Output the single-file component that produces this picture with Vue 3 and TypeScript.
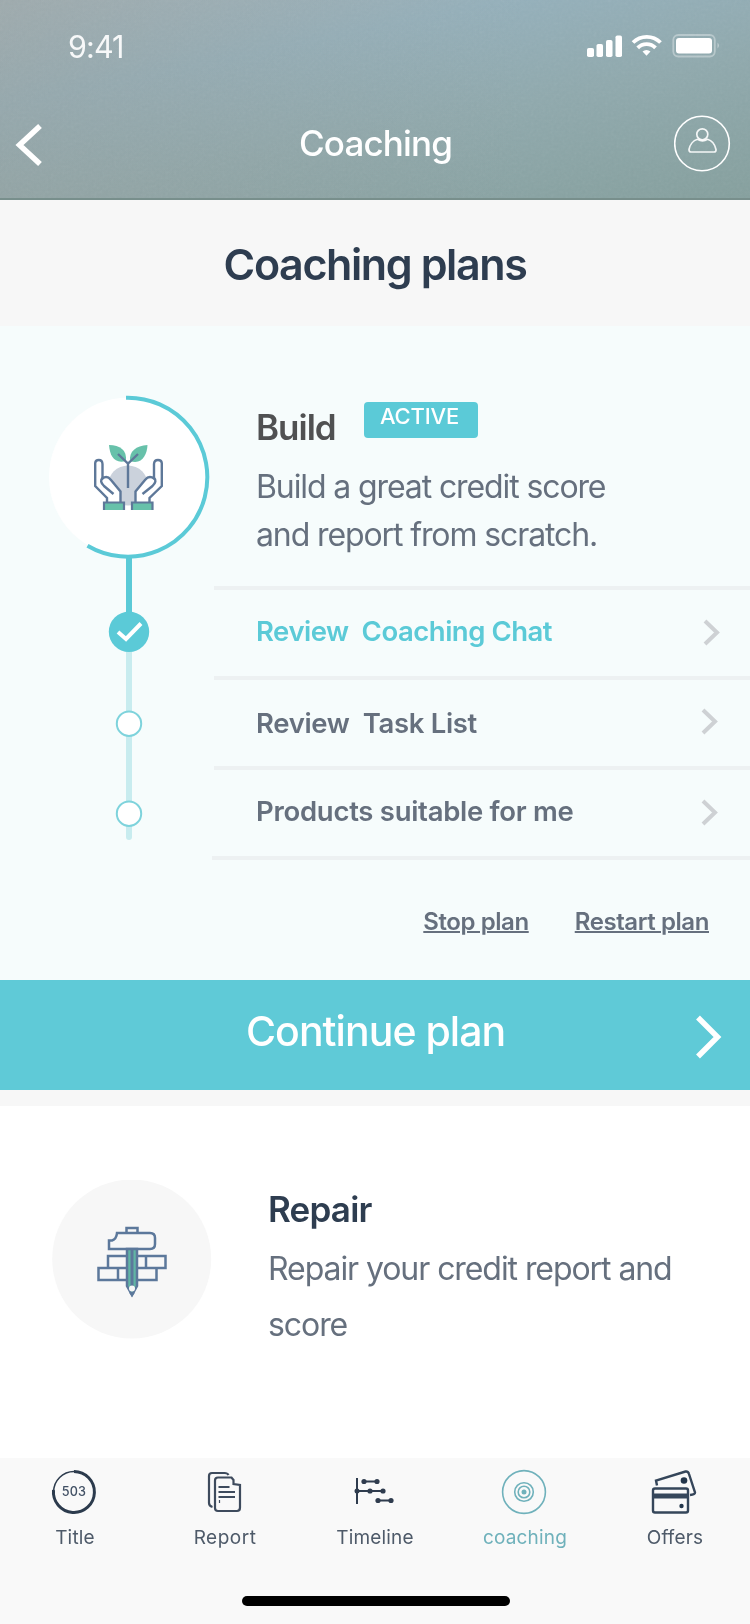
<script setup lang="ts">
interface Step { label: string; done: boolean; cls: string }
const steps: Step[] = [
  { label: 'Review\u00a0 Coaching Chat', done: true, cls: 's1' },
  { label: 'Review\u00a0 Task List', done: false, cls: 's2' },
  { label: 'Products suitable for me', done: false, cls: 's3' },
]
</script>

<template>
  <div class="screen">
    <header class="top">
      <svg class="grain" width="750" height="198"><filter id="grain"><feTurbulence type="fractalNoise" baseFrequency="0.35" numOctaves="2" /><feColorMatrix type="saturate" values="0" /></filter><rect width="750" height="198" filter="url(#grain)" /></svg>
      <div class="status">
        <span class="time">9:41</span>
        <svg width="136" height="26" viewBox="584 32 136 26">
          <g fill="#fff">
            <rect x="587" y="48" width="7" height="9" rx="1.8" />
            <rect x="596.500" y="44" width="6.500" height="13" rx="1.8" />
            <rect x="606" y="40" width="6.500" height="17" rx="1.8" />
            <rect x="615.500" y="35.500" width="6.500" height="21.500" rx="1.800" />
            <path d="M642.500 51.500L646.500 55.700L650.500 51.500A6 6 0 0 0 642.500 51.500Z" />
            <rect x="676" y="38" width="36" height="15.500" rx="3" />
          </g>
          <g fill="none" stroke="#fff" stroke-width="3.800">
            <path d="M633 42.500A19.500 19.500 0 0 1 660.500 42.500" />
            <path d="M637.700 47.800A12.500 12.500 0 0 1 655.500 47.800" />
          </g>
          <rect x="673.300" y="35" width="41.500" height="21.500" rx="5" fill="none" stroke="#fff" stroke-opacity=".35" stroke-width="1.800" />
          <path d="M717.500 42.500v6q1.500-1.500 1.500-3t-1.500-3" fill="#fff" fill-opacity=".4" />
        </svg>
      </div>
      <div class="nav">
        <svg width="30" height="44" viewBox="0 0 30 44"><path d="M26 3L5.500 22L26 41" fill="none" stroke="#fff" stroke-width="5.500" /></svg>
        <h1><span>Coaching</span></h1>
        <svg width="58" height="58" viewBox="0 0 58 58" fill="none" stroke="#fff">
          <circle cx="28" cy="28.500" r="27.300" stroke-width="1.600" />
          <g stroke-width="1.700" stroke-opacity=".9"><circle cx="28.300" cy="19.300" r="5.500" />
          <path d="M23.500 24.300C19 25.500 15.800 30 15 34.500Q15 37 17 37H40Q42.200 37 42 34.500C41 30 38 25.500 33.500 24.300Q28.500 27.300 23.500 24.300Z" stroke-linejoin="round" /></g>
        </svg>
      </div>
    </header>

    <h2 class="title"><span>Coaching plans</span></h2>

    <section class="build">
      <div class="rail">
        <svg width="190" height="450" viewBox="40 390 190 450">
          <circle cx="128.500" cy="477" r="79.500" fill="#fff" />
          <path d="M129 556V632" stroke="#5bcad7" stroke-width="6" />
          <path d="M129 652V837" stroke="#c8ecef" stroke-width="6" stroke-linecap="round" />
          <path d="M126 397.700A79.500 79.500 0 1 1 87.500 545.700" fill="none" stroke="#5bcad7" stroke-width="4" />
          <circle cx="129" cy="631.800" r="20.200" fill="#5bcad7" />
          <path d="M118 632L126 639L141 623.500" fill="none" stroke="#fff" stroke-width="4" />
          <g fill="#fff" stroke="#7ed3dc" stroke-width="2"><circle cx="129" cy="723.700" r="12.200" /><circle cx="129" cy="813.700" r="12.200" /></g>
          <circle cx="128" cy="485.500" r="20" fill="#cbd2dc" />
          <g fill="#67c1aa">
            <path d="M109 445C120 445 127 450 126 461C114 464 110 456 109 445Z" />
            <path d="M147.500 445C136 446 129 451 130 461C142 465 147 455 147.500 445Z" />
          </g>
          <g stroke="#5e7899" stroke-width="2.400">
            <path d="M107 502V498L95.200 486V463Q95.500 460 98.800 460Q102.300 460 102.500 464V478.500Q107 475 111 480L120.500 491.500V502" fill="#fff" />
            <path d="M149.500 502V498L161.800 486V463Q161.500 460 158 460Q154.200 460 154 464V478.500Q149 475 145 480L135.500 491.500V502" fill="#fff" />
          </g>
          <g fill="none" stroke="#5e7899" stroke-width="2.400">
            <path d="M102.600 478Q99 481 104 486L113.500 494M154 478Q157.500 481 152.500 486L142.500 494" />
            <path d="M118 454L128 463.500L138 454M128 463V488" />
          </g>
          <g fill="#67c1aa" stroke="#5e7899" stroke-width="2.200">
            <path d="M104 510V502.500H124V510M132 510V502.500H152.500V510" />
          </g>
        </svg>
      </div>
      <div class="plan">
        <div class="head"><h3><span>Build</span></h3><b class="badge"><span>ACTIVE</span></b></div>
        <p><span>Build a great credit score</span><br /><span>and report from scratch.</span></p>
        <ul>
          <li v-for="s in steps" :key="s.label" :class="[s.cls, { done: s.done }]">
            <span>{{ s.label }}</span>
            <svg width="22" height="30" viewBox="0 0 22 30"><path d="M4 3L16 14.500L4 26" fill="none" stroke="#ced1d4" stroke-width="4" /></svg>
          </li>
        </ul>
        <div class="links"><a>Stop plan</a><a>Restart plan</a></div>
      </div>
    </section>

    <button class="continue">
      <span>Continue plan</span>
      <svg width="30" height="46" viewBox="0 0 30 46"><path d="M3 3.500L22.500 23L3 42.500" fill="none" stroke="#fff" stroke-width="5.500" /></svg>
    </button>

    <section class="repair">
      <svg width="160" height="160" viewBox="52 1180 160 160">
        <circle cx="131.700" cy="1259" r="79.500" fill="#f7f7f7" />
        <g fill="none" stroke="#5c789b" stroke-width="2.500">
          <path d="M126.500 1232V1228H137.500V1232" />
          <path d="M117 1233H150Q155 1233 155 1238V1244Q155 1249 150 1249H109V1240.500H112Q116.500 1239 117 1233Z" />
          <path d="M126 1256H108V1268H126M138 1256H165.500V1268H138M146 1256V1268M126 1268H98.500V1280H126M138 1268H156.500V1280H138M118 1268V1280" />
          <path d="M127 1249V1286L132 1295L137 1286V1249Z" fill="#61b5a4" />
          <path d="M132 1249V1286" stroke-width="3" />
        </g>
        <circle cx="132" cy="1288.500" r="3" fill="#f7f7f7" />
        <path d="M129 1292.500H135L132 1297Z" fill="#5c789b" />
      </svg>
      <div class="rtext"><h3><span>Repair</span></h3><p><span>Repair your credit report and</span><br /><span>score</span></p></div>
    </section>

    <footer class="bottom">
      <nav>
        <a><svg width="48" height="48" viewBox="50 1468 48 48"><circle cx="74" cy="1492" r="20.400" fill="none" stroke="#2c3b4d" stroke-width="1.500" /><path d="M74 1471.500A20.500 20.500 0 1 1 53.500 1490" fill="none" stroke="#2c3b4d" stroke-width="3" /><text x="74" y="1495.500" text-anchor="middle" textLength="24.500" lengthAdjust="spacingAndGlyphs" font-size="12.500" font-weight="500" fill="#415064">503</text></svg><span>Title</span></a>
        <a><svg width="48" height="48" viewBox="200.500 1468 48 48" fill="none" stroke="#3e4b5d" stroke-width="2.200"><path d="M213 1507Q209.500 1506 209.500 1503V1476Q209.500 1473 212.500 1473H225Q228 1473 229 1475" /><path d="M218.500 1477.500H232L234 1480V1484L240.500 1485V1507.500Q240.500 1511 237.500 1511H218.500Q215.500 1511 215.500 1508V1480.500Q215.500 1477.500 218.500 1477.500Z" /><path d="M219 1487H230M219 1492H235.500M219 1497H235.500" /><path d="M220 1500v3" stroke-width="1.200" /></svg><span class="t2">Report</span></a>
        <a><svg width="48" height="48" viewBox="350.500 1468 48 48" stroke="#2f3c4e" stroke-width="2" fill="#2f3c4e"><path d="M357.500 1478V1504M364 1481.500H376M356 1491H384M378 1500.500H391" /><g stroke="none"><circle cx="364.500" cy="1481.500" r="2.600" /><circle cx="377.500" cy="1481.500" r="2.600" /><circle cx="357.500" cy="1491" r="2.500" /><circle cx="370.500" cy="1491" r="2.600" /><circle cx="383.500" cy="1491" r="2.600" /><circle cx="378.500" cy="1500.500" r="2.600" /><circle cx="391.500" cy="1500.500" r="2.600" /></g></svg><span>Timeline</span></a>
        <a class="on"><svg width="48" height="48" viewBox="500 1468 48 48" fill="none" stroke="#6fb1bb" stroke-width="1.600"><circle cx="524" cy="1492" r="21.400" /><circle cx="524" cy="1492" r="9.300" /><circle cx="524" cy="1492" r="5.800" /><circle cx="524" cy="1492" r="2.500" fill="#6fb1bb" stroke="none" /></svg><span>coaching</span></a>
        <a><svg width="48" height="48" viewBox="650.500 1468 48 48" fill="none" stroke="#35465a" stroke-width="2.400"><path d="M657.500 1485.500L656.500 1480.500L686 1471.500Q689 1471 689.500 1474L695.500 1492.500Q695.500 1494.500 690.500 1495" /><rect x="653.500" y="1488.500" width="35" height="24" rx="2" /><path d="M653 1496H688" stroke-width="5" /><circle cx="684.500" cy="1480.500" r="3.300" fill="#23364b" stroke="none" /><circle cx="682" cy="1506" r="2.200" fill="#23364b" stroke="none" /></svg><span>Offers</span></a>
      </nav>
      <div class="home"></div>
    </footer>
  </div>
</template>

<style>
body { margin: 0; }
</style>

<style scoped>
* { box-sizing: border-box; }
.screen { width: 750px; height: 1624px; overflow: hidden; display: flex; flex-direction: column; background: #fff; font-family: Inter, "Liberation Sans", sans-serif; color: #66707e; }
h1, h2, h3, p, ul { margin: 0; padding: 0; font-weight: 400; list-style: none; }
span { white-space: nowrap; }
svg { display: block; flex: none; }
.top { position: relative; height: 200px; flex: none; color: #fff; background: linear-gradient(to right, rgba(150,153,146,.36), rgba(142,174,188,0) 70%), linear-gradient(168deg, #a2b3bb 0%, #94afba 30%, #8fa8ac 60%, #859f9d 100%); border-bottom: 2px solid #788f8c; }
.grain { position: absolute; left: 0; top: 0; opacity: .2; mix-blend-mode: soft-light; }
.status { height: 93px; padding: 31px 30px 0 68px; display: flex; justify-content: space-between; }
.status svg { margin-top: 1px; }
.time { font-size: 30.5px; line-height: 32px; letter-spacing: -.9px; color: rgba(255,255,255,.92); }
.nav { height: 105px; padding: 22px 18px 0 14px; display: flex; }
.nav > svg:first-child { margin-top: 8px; }
.nav h1 { flex: 1; padding-left: 255px; font-size: 35px; line-height: 56px; font-weight: 500; letter-spacing: -.85px; }
.title { height: 126px; flex: none; text-align: center; background: #f7f7f7; color: #2e3d50; font-size: 43px; font-weight: 600; line-height: 128px; letter-spacing: -1.4px; }
.build { height: 654px; flex: none; background: #f6fcfc; display: flex; }
.rail { width: 212px; padding: 64px 0 0 40px; }
.plan { flex: 1; padding-top: 76px; }
.head { display: flex; padding-left: 44px; height: 61px; }
h3 { font-size: 35px; font-weight: 600; line-height: 50px; color: #505152; letter-spacing: -1px; width: 108px; }
.badge { width: 114px; height: 36px; border-radius: 4px; background: #5bcad7; color: #fff; font-weight: 500; font-size: 22px; line-height: 28px; text-align: center; padding-right: 3px; letter-spacing: -.15px; }
p { font-size: 32px; line-height: 48px; padding-left: 44px; letter-spacing: -1.11px; }
.plan ul { margin: 27px 0 0 2px; }
li { height: 90px; border-top: 4px solid #edf1f2; padding: 0 29px 0 42px; display: flex; justify-content: space-between; font-size: 27.5px; font-weight: 600; line-height: 82px; letter-spacing: -.28px; }
li svg { margin-top: 28px; }
li.done { color: #5bcad7; }
li.s1 { letter-spacing: -.48px; }
li.s1 svg { margin-right: -2px; }
li.s2 { letter-spacing: -.34px; line-height: 86px; }
li.s2 svg { margin-top: 26.5px; }
.links { border-top: 4px solid #edf1f2; display: flex; justify-content: flex-end; gap: 46px; padding: 46px 41px 0 0; font-size: 24px; line-height: 32px; font-weight: 600; letter-spacing: -.42px; text-decoration: underline; text-decoration-thickness: 2px; }
.continue { height: 110px; flex: none; border: 0; padding: 0 25px 0 246px; background: #5fcad7; color: #fff; display: flex; justify-content: space-between; font: 500 41px/103px Inter, sans-serif; letter-spacing: -.96px; text-align: left; }
.continue svg { margin-top: 34px; }
.repair { height: 368px; flex: none; border-top: 16px solid #f7f7f7; display: flex; padding: 74px 0 0 52px; }
.rtext { padding-left: 12px; }
.rtext h3 { color: #2e3d50; padding-left: 44px; line-height: 58px; letter-spacing: -.8px; }
.rtext p { padding-top: 3px; line-height: 56px; letter-spacing: -1.07px; }
.bottom { height: 166px; background: #f9f9f9; }
nav { display: flex; height: 136px; margin-left: -1px; }
nav a { width: 150px; flex: none; display: flex; flex-direction: column; align-items: center; padding-top: 10px; color: #4e5a69; font-size: 19px; line-height: 44px; letter-spacing: .18px; }
nav a span { padding-left: 2px; }
.t2 { letter-spacing: .5px; }
nav a.on { color: #6fb1bb; }
.home { width: 268px; height: 10px; border-radius: 5px; background: #000; margin: 2px 0 0 242px; }
</style>
